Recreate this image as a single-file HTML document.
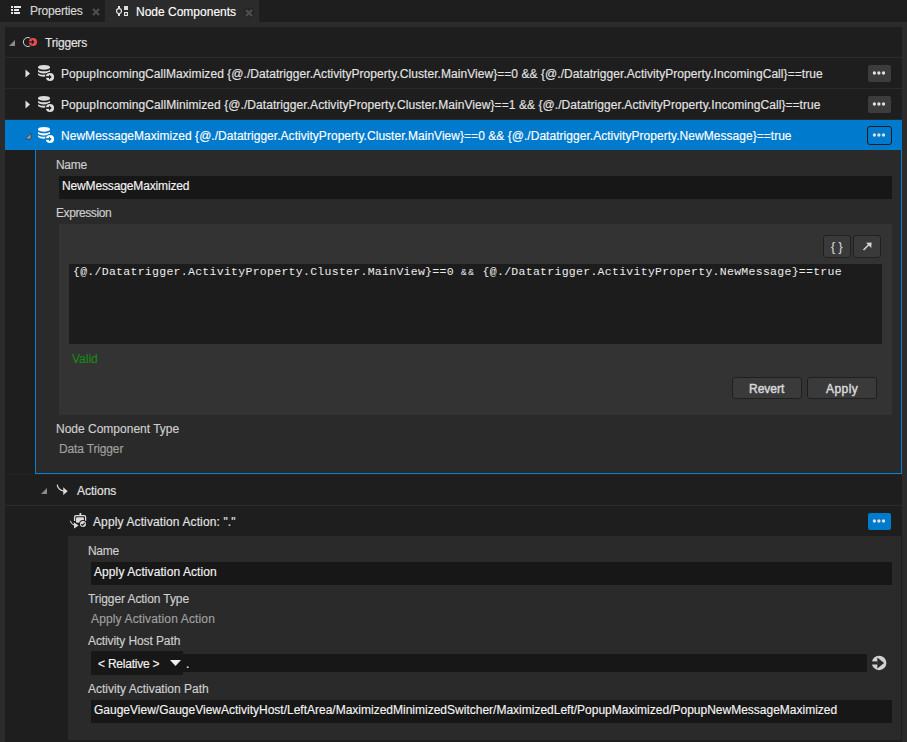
<!DOCTYPE html>
<html><head><meta charset="utf-8">
<style>
*{margin:0;padding:0;box-sizing:border-box}
html,body{width:907px;height:742px;overflow:hidden;background:#2b2b2b}
body{position:relative;font-family:"Liberation Sans",sans-serif;font-size:12px;color:#e4e4e4}
.a{position:absolute}
.t{position:absolute;white-space:nowrap;line-height:16px;height:16px;-webkit-text-stroke:0.15px currentColor}
.mono{font-family:"Liberation Mono",monospace}
</style></head><body>
<svg width="0" height="0" style="position:absolute">
<defs>
<symbol id="db" viewBox="0 0 22 22">
<path d="M3 9L3 12.2A6 2.6 0 0 0 15 12.2L15 9Z" fill="currentColor"/>
<ellipse cx="9" cy="10.5" rx="6.2" ry="2.3" fill="var(--bg)"/>
<path d="M3 5.3L3 8.9A6 2.7 0 0 0 15 8.9L15 5.3Z" fill="currentColor"/>
<ellipse cx="9" cy="7.0" rx="6.2" ry="2.3" fill="var(--bg)"/>
<ellipse cx="9" cy="5.3" rx="6" ry="2.4" fill="currentColor"/>
<circle cx="15" cy="15" r="5.1" fill="var(--bg)"/>
<circle cx="15" cy="15" r="4.1" fill="currentColor"/>
<rect x="10.7" y="14.15" width="4.5" height="1.7" fill="var(--bg)"/>
<path d="M14 12.5L16.7 15L14 17.5Z" fill="var(--bg)"/>
</symbol>
<symbol id="dots" viewBox="0 0 23 17">
<circle cx="6.4" cy="8" r="1.65" fill="#e2e2e2"/>
<circle cx="10.9" cy="8" r="1.65" fill="#e2e2e2"/>
<circle cx="15.5" cy="8" r="1.65" fill="#e2e2e2"/>
</symbol>
</defs></svg>
<!-- tab bar -->
<div class="a" style="left:0;top:0;width:907px;height:22px;background:#1e1e1e"></div>
<div class="a" style="left:105px;top:0;width:154px;height:22px;background:#2b2b2b"></div>
<div class="a" style="left:0;top:22px;width:907px;height:5px;background:#2b2b2b"></div>
<!-- tab 1 icon -->
<svg class="a" style="left:11px;top:6px" width="11" height="9" viewBox="0 0 11 9">
<rect x="0" y="0" width="2" height="2" fill="#e6e6e6"/><rect x="3" y="0" width="7" height="2" fill="#e6e6e6"/>
<rect x="0" y="3" width="2" height="2" fill="#e6e6e6"/><rect x="3" y="3" width="5" height="2" fill="#e6e6e6"/>
<rect x="0" y="6" width="2" height="2" fill="#e6e6e6"/><rect x="3" y="6" width="6" height="2" fill="#e6e6e6"/>
</svg>
<div class="t m" style="letter-spacing:-0.22px;left:30px;top:3px;color:#d8d8d8">Properties</div>
<svg class="a" style="left:92px;top:8px" width="8" height="8" viewBox="0 0 8 8"><path d="M1 1L7 7M7 1L1 7" stroke="#4e4e4e" stroke-width="2.2"/></svg>
<!-- tab 2 -->
<svg class="a" style="left:110px;top:2px" width="24" height="18" viewBox="0 0 24 18">
<circle cx="9" cy="9" r="2.45" fill="none" stroke="#e6e6e6" stroke-width="1.15"/>
<rect x="8" y="4" width="2" height="2.4" fill="#e6e6e6"/><rect x="8" y="11.6" width="2" height="2.4" fill="#e6e6e6"/>
<rect x="14" y="4" width="4" height="4" fill="#dedede"/>
<rect x="14" y="10" width="4" height="4" fill="#e6e6e6"/>
<rect x="15.2" y="11.2" width="1.6" height="1.6" fill="#000"/>
</svg>
<div class="t m" style="left:136px;top:4px;color:#ffffff">Node Components</div>
<div class="a" style="left:244px;top:8px;width:10px;height:10px;background:#262626"></div>
<svg class="a" style="left:245px;top:9px" width="8" height="8" viewBox="0 0 8 8"><path d="M1 1L7 7M7 1L1 7" stroke="#4e4e4e" stroke-width="2.2"/></svg>

<!-- content -->
<div class="a" style="left:5px;top:27px;width:897px;height:715px;background:#1e1e1e"></div>
<!-- separators -->
<div class="a" style="left:5px;top:57px;width:897px;height:1px;background:#2b2b2b"></div>
<div class="a" style="left:5px;top:88px;width:897px;height:1px;background:#2b2b2b"></div>
<div class="a" style="left:5px;top:119px;width:897px;height:1px;background:#2b2b2b"></div>

<!-- Triggers row -->
<svg class="a" style="left:9px;top:40px" width="7" height="7" viewBox="0 0 7 7"><path d="M6 0V6H0Z" fill="#8a8a8a"/></svg>
<svg class="a" style="left:20px;top:34px" width="20" height="16" viewBox="0 0 20 16">
<circle cx="7.9" cy="8" r="4.5" fill="none" stroke="#d4d4d4" stroke-width="1"/>
<circle cx="13" cy="8" r="4.7" fill="#1e1e1e"/>
<circle cx="13" cy="8" r="4.05" fill="#ee4a4e"/>
<rect x="8.6" y="7.4" width="3.6" height="1.2" fill="#1e1e1e"/>
<path d="M11.9 5.2L14.4 8L11.9 10.7Z" fill="#1e1e1e"/>
</svg>
<div class="t m" style="letter-spacing:-0.2px;left:45px;top:35px">Triggers</div>

<!-- row 1 -->
<svg class="a" style="left:25px;top:69px" width="6" height="9" viewBox="0 0 6 9"><path d="M0.5 0.5L5 4.5L0.5 8.5Z" fill="#e0e0e0"/></svg>
<svg class="a" style="left:35px;top:62px;color:#dcdcdc;--bg:#1e1e1e" width="22" height="22"><use href="#db"/></svg>
<div class="t m" style="letter-spacing:0.056px;left:61px;top:66px">PopupIncomingCallMaximized {@./Datatrigger.ActivityProperty.Cluster.MainView}==0 &amp;&amp; {@./Datatrigger.ActivityProperty.IncomingCall}==true</div>
<div class="a dots" style="left:868px;top:65px;width:23px;height:17px;background:#3c3c3c;border-radius:2px"><svg width="23" height="17" style="display:block"><use href="#dots"/></svg></div>

<!-- row 2 -->
<svg class="a" style="left:25px;top:100px" width="6" height="9" viewBox="0 0 6 9"><path d="M0.5 0.5L5 4.5L0.5 8.5Z" fill="#e0e0e0"/></svg>
<svg class="a" style="left:35px;top:93px;color:#dcdcdc;--bg:#1e1e1e" width="22" height="22"><use href="#db"/></svg>
<div class="t m" style="letter-spacing:0.065px;left:61px;top:97px">PopupIncomingCallMinimized {@./Datatrigger.ActivityProperty.Cluster.MainView}==1 &amp;&amp; {@./Datatrigger.ActivityProperty.IncomingCall}==true</div>
<div class="a dots" style="left:868px;top:96px;width:23px;height:17px;background:#3c3c3c;border-radius:2px"><svg width="23" height="17" style="display:block"><use href="#dots"/></svg></div>

<!-- row 3 selected -->
<div class="a" style="left:5px;top:120px;width:897px;height:30px;background:#007acc"></div>
<svg class="a" style="left:25px;top:133px" width="7" height="7" viewBox="0 0 7 7"><path d="M6 0.5V6H0.5Z" fill="#a39c99" stroke="#303030" stroke-width="0.6"/></svg>
<svg class="a" style="left:35px;top:124px;color:#ffffff;--bg:#007acc" width="22" height="22"><use href="#db"/></svg>
<div class="t m" style="letter-spacing:0.036px;left:61px;top:128px;color:#fff">NewMessageMaximized {@./Datatrigger.ActivityProperty.Cluster.MainView}==0 &amp;&amp; {@./Datatrigger.ActivityProperty.NewMessage}==true</div>
<div class="a dots" style="left:867px;top:126px;width:25px;height:19px;background:#007acc;border:1px solid #1a1a1a;border-radius:3px"><svg width="23" height="17" style="display:block"><use href="#dots"/></svg></div>

<!-- details panel -->
<div class="a" style="left:35px;top:150px;width:867px;height:324px;background:#2a2a2a;border-left:1px solid #0c80d4;border-right:1px solid #0c80d4;border-bottom:1px solid #0c80d4"></div>
<div class="t m" style="left:56px;top:157px;color:#cfcfcf;letter-spacing:-0.3px">Name</div>
<div class="a" style="left:59px;top:176px;width:833px;height:23px;background:#171717"></div>
<div class="t m" style="left:62px;top:178px;color:#f4f4f4;letter-spacing:-0.14px">NewMessageMaximized</div>
<div class="t m" style="left:56px;top:205px;color:#cfcfcf;letter-spacing:-0.42px">Expression</div>
<div class="a" style="left:59px;top:224px;width:833px;height:191px;background:#333333"></div>
<div class="a" style="left:823px;top:235px;width:28px;height:23px;background:#3a3a3a;border:1px solid #202020;border-radius:3px"></div>
<div class="a" style="left:853px;top:235px;width:28px;height:23px;background:#3a3a3a;border:1px solid #202020;border-radius:3px"></div>
<div class="t" style="left:831px;top:239px;color:#d8d8d8;font-size:12px;letter-spacing:3.5px">{}</div>
<svg class="a" style="left:861px;top:241px" width="12" height="11" viewBox="0 0 12 11"><path d="M2.5 9L8 3.5" stroke="#d4d4d4" stroke-width="1.6"/><path d="M5 1.8L10.6 1.5L10.3 7Z" fill="#d4d4d4"/></svg>
<div class="a" style="left:69px;top:264px;width:813px;height:80px;background:#1c1c1c"></div>
<div class="t mono m" style="left:73px;top:264px;color:#ececec;font-size:11.5px;letter-spacing:0.285px;-webkit-text-stroke:0">{@./Datatrigger.ActivityProperty.Cluster.MainView}==0 <span style="font-size:9.5px;letter-spacing:1.485px;vertical-align:0">&amp;&amp;</span> {@./Datatrigger.ActivityProperty.NewMessage}==true</div>
<div class="t m" style="left:72px;top:351px;color:#178a17">Valid</div>
<div class="a" style="left:732px;top:377px;width:70px;height:22px;background:#3a3a3a;border:1px solid #1f1f1f;border-radius:3px"></div>
<div class="a" style="left:807px;top:377px;width:70px;height:22px;background:#3a3a3a;border:1px solid #1f1f1f;border-radius:3px"></div>
<div class="t m" style="left:749px;top:381px;color:#d8d8d8;-webkit-text-stroke:0.45px #d8d8d8">Revert</div>
<div class="t m" style="left:826px;top:381px;color:#d8d8d8;-webkit-text-stroke:0.45px #d8d8d8;letter-spacing:0.45px">Apply</div>
<div class="t m" style="left:56px;top:421px;color:#cfcfcf">Node Component Type</div>
<div class="t m" style="left:59px;top:441px;color:#a0a0a0;letter-spacing:-0.15px">Data Trigger</div>

<!-- Actions -->
<div class="a" style="left:5px;top:474px;width:897px;height:1px;background:#252525"></div>
<div class="a" style="left:5px;top:505px;width:897px;height:1px;background:#2b2b2b"></div>
<svg class="a" style="left:41px;top:488px" width="7" height="7" viewBox="0 0 7 7"><path d="M6 0V6H0Z" fill="#8a8a8a"/></svg>
<svg class="a" style="left:56px;top:484px" width="13" height="13" viewBox="0 0 13 13">
<path d="M1.4 1.2Q1.8 5.6 7.8 7.2" fill="none" stroke="#d8d8d8" stroke-width="1.3" stroke-linecap="round"/><path d="M7.2 3.2L11.7 7.3L7.3 11.1Z" fill="#d8d8d8"/>
</svg>
<div class="t m" style="left:77px;top:483px">Actions</div>
<svg class="a" style="left:66px;top:508px" width="24" height="24" viewBox="0 0 24 24">
<rect x="13.5" y="5" width="1.8" height="2.3" fill="#dcdcdc"/>
<path d="M8.6 13V9Q8.6 7.6 10 7.6H18.2Q19.6 7.6 19.6 9V13" fill="none" stroke="#dcdcdc" stroke-width="1.3"/>
<rect x="10" y="9.2" width="8" height="5.5" rx="1.3" fill="#dcdcdc"/>
<circle cx="17" cy="16" r="3.9" fill="#1e1e1e"/>
<circle cx="17" cy="16" r="3" fill="#dcdcdc"/>
<path d="M15.3 16.1L16.6 17.4L18.8 14.8" fill="none" stroke="#1e1e1e" stroke-width="1.25"/>
<path d="M4.4 13.2Q4.9 16.3 8.6 17.4" fill="none" stroke="#dcdcdc" stroke-width="1" stroke-linecap="round"/>
<path d="M7.8 14.3L12.6 17.4L8.2 20.6Z" fill="#dcdcdc"/>
</svg>
<div class="t m" style="left:93px;top:514px;letter-spacing:0.12px">Apply Activation Action: "."</div>
<div class="a" style="left:868px;top:513px;width:23px;height:17px;background:#007acc;border-radius:2px"><svg width="23" height="17" style="display:block"><use href="#dots"/></svg></div>

<div class="a" style="left:68px;top:536px;width:833px;height:204px;background:#2a2a2a"></div>
<div class="t m" style="left:88px;top:543px;color:#cfcfcf;letter-spacing:-0.3px">Name</div>
<div class="a" style="left:91px;top:562px;width:801px;height:23px;background:#171717"></div>
<div class="t m" style="left:94px;top:564px;color:#f4f4f4;letter-spacing:0.09px">Apply Activation Action</div>
<div class="t m" style="left:88px;top:591px;color:#cfcfcf;letter-spacing:-0.09px">Trigger Action Type</div>
<div class="t m" style="left:91px;top:611px;color:#a0a0a0;letter-spacing:0.14px">Apply Activation Action</div>
<div class="t m" style="left:88px;top:633px;color:#cfcfcf;letter-spacing:-0.1px">Activity Host Path</div>
<div class="a" style="left:91px;top:651px;width:92px;height:24px;background:#171717"></div>
<div class="a" style="left:183px;top:654px;width:684px;height:18px;background:#171717"></div>
<div class="t m" style="left:98px;top:656px;color:#f4f4f4;letter-spacing:-0.23px">&lt; Relative &gt;</div>
<svg class="a" style="left:170px;top:660px" width="11" height="7" viewBox="0 0 11 7"><path d="M0 0H11L5.5 6Z" fill="#f0f0f0"/></svg>
<div class="t m" style="left:186px;top:656px;color:#f4f4f4">.</div>
<svg class="a" style="left:871px;top:655px" width="16" height="16" viewBox="0 0 16 16"><circle cx="8.1" cy="7.9" r="7.25" fill="#d2d2d2"/><rect x="0" y="6.4" width="6.6" height="3.1" fill="#2a2a2a"/><path d="M6.3 2.6L13.1 7.95L6.3 13.4Z" fill="#2a2a2a"/></svg>
<div class="t m" style="left:88px;top:681px;color:#cfcfcf">Activity Activation Path</div>
<div class="a" style="left:91px;top:700px;width:801px;height:23px;background:#171717"></div>
<div class="t m" style="left:94px;top:702px;color:#f4f4f4">GaugeView/GaugeViewActivityHost/LeftArea/MaximizedMinimizedSwitcher/MaximizedLeft/PopupMaximized/PopupNewMessageMaximized</div>
</body></html>
